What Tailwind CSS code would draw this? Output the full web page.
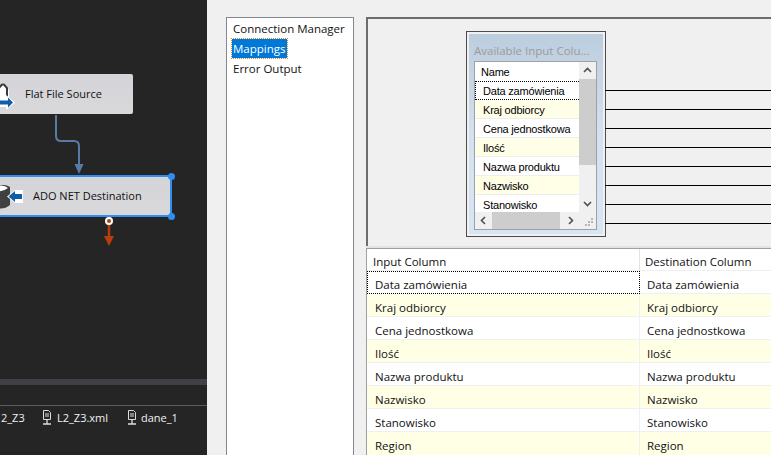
<!DOCTYPE html>
<html><head><meta charset="utf-8"><script src="https://cdn.jsdelivr.net/npm/@tailwindcss/browser@4"></script></head>
<body class="m-0 overflow-hidden">
<div class="flex w-[771px] h-[455px] overflow-hidden bg-[#f0f0f0] text-[11.5px] text-black font-['Open_Sans','Noto_Sans',sans-serif]">
  <aside class="w-[207px] h-full flex flex-col bg-[#252526] shrink-0">
    <div class="relative h-[379px]">
      <div class="absolute left-[-20px] top-[74px] w-[153px] h-[40px] rounded-[2px] bg-gradient-to-b from-[#d4d4d8] to-[#d9d9dc] flex items-center pl-[45px] text-[11px] text-[#111]">Flat File Source</div>
      <svg class="absolute left-0 top-[76px]" width="18" height="36" viewBox="0 0 18 36">
        <path d="M-2 14 L2 7 H4 L9 14 V24 H-2Z" fill="#fff"/>
        <path d="M-2 13 L2 8.500 H4 L7 12 V21" fill="none" stroke="#3a3a3a" stroke-width="2"/>
        <path d="M-1 22 H6 V19 L15 26.500 L6 34 V31 H-1Z" fill="#fff"/>
        <path d="M-1 24.500 H8 V21.500 L13 26.500 L8 31.500 V28.500 H-1Z" fill="#0f5ea8"/>
      </svg>
      <svg class="absolute left-[50px] top-[114px]" width="40" height="64" viewBox="0 0 40 64" fill="none">
        <path d="M6 1 V22 Q6 27 11 27 H24 Q29 27 29 32 V52" stroke="#5a7aa6" stroke-width="2"/>
        <path d="M24.500 50 H33.500 L29 60 Z" fill="#5a7aa6"/>
      </svg>
      <div class="absolute left-[-20px] top-[175px] w-[192px] h-[42px] border-2 border-[#2e8ff0] bg-gradient-to-b from-[#d4d4d8] to-[#d9d9dc] flex items-center pl-[51px] text-[11px] text-[#111]">ADO NET Destination</div>
      <svg class="absolute left-0 top-[178px]" width="26" height="36" viewBox="0 0 26 36">
        <path d="M-3 9 Q4 5 10 9 V27 Q4 32 -3 30Z" fill="#404040"/>
        <path d="M-3 9 Q3 6 8 10 Q3 14 -3 13Z" fill="#fff"/>
        <path d="M23 12 H15 L7 18.500 L15 25 H23Z" fill="#fff"/>
        <path d="M22 16 H15 V13 L8.500 18.500 L15 24 V21 H22Z" fill="#0f5ea8"/>
      </svg>
      <span class="absolute left-[168px] top-[173px] w-[7px] h-[7px] rounded-full bg-[#2e8ff0]"></span>
      <span class="absolute left-[168px] top-[213px] w-[7px] h-[7px] rounded-full bg-[#2e8ff0]"></span>
      <svg class="absolute left-[103px] top-[216px]" width="12" height="32" viewBox="0 0 12 32" fill="none">
        <path d="M6 8 V22" stroke="#b83c0c" stroke-width="2.500"/>
        <path d="M1 20 H11 L6 30 Z" fill="#b83c0c"/>
        <circle cx="6" cy="5" r="3" fill="#b83c0c" stroke="#fff" stroke-width="2"/>
      </svg>
    </div>
    <div class="h-[6px] bg-[#3f4144]"></div>
    <div class="h-[20px]"></div>
    <div class="h-[1px] bg-[#5b5b5b]"></div>
    <div class="flex items-center h-[24px] pl-[1px] text-[#f1f1f1] text-[11px] relative">
      <span class="w-[41px]">2_Z3</span>
      <svg width="10" height="16" viewBox="0 0 10 16" class="mr-[5px]" fill="none" stroke="#ddd"><path d="M1.500 .5 H6.500 L8.500 2.500 V9.500 H1.500 Z M3 4 H7 M3 6 H7"/><path d="M5 10 V14 M1 14 H9" stroke-width="1.300"/></svg>
      <span class="w-[70px]">L2_Z3.xml</span>
      <svg width="10" height="16" viewBox="0 0 10 16" class="mr-[4px]" fill="none" stroke="#ddd"><path d="M1.500 .5 H6.500 L8.500 2.500 V9.500 H1.500 Z M3 4 H7 M3 6 H7"/><path d="M5 10 V14 M1 14 H9" stroke-width="1.300"/></svg>
      <span>dane_1</span>
    </div>
  </aside>

  <main class="flex-1 flex pt-[17px] pl-[19px] min-w-0">
    <nav class="w-[128px] h-[500px] shrink-0 bg-white border border-[#828790] pl-[6px] pt-[1px] leading-[20px] text-[#111]">
      <div class="h-[20px]">Connection Manager</div>
      <div class="h-[20px]"><span class="inline-block h-[19px] leading-[19px] px-[1px] -ml-[1px] bg-[#0078d7] text-white outline outline-1 outline-dotted outline-[#c98a2d]">Mappings</span></div>
      <div class="h-[20px]">Error Output</div>
    </nav>

    <section class="ml-[12px] flex-1 flex flex-col min-w-0">
      <div class="relative h-[231px] border-t-2 border-l-2 border-[#6d6d6d]">
        <div class="absolute left-[98px] top-[12px] w-[140px] h-[206px] border border-[#4d4d4d] p-[2px] bg-[#f0f0f0]">
          <div class="h-full flex flex-col bg-gradient-to-b from-[#bccddd] via-[#d3e1f0] to-[#d8e5f5] pl-[5px] pr-[6px] pb-[5px]">
            <div class="h-[27px] leading-[33px] text-[#9b9b9b] whitespace-nowrap">Available Input Colu...</div>
            <div class="flex-1 border border-[#a0a0a0] bg-white flex flex-col text-[11px] font-['Liberation_Sans',sans-serif]">
              <div class="flex-1 flex min-h-0">
                <div class="flex-1 min-w-0 tracking-[-0.2px]">
                  <div class="h-[19px] leading-[20px] pl-[6px] text-black">Name</div>
                  <div class="h-[19px] leading-[19px] pl-[7px] border-y border-l border-dotted border-black">Data zamówienia</div>
                  <div class="h-[19px] leading-[20px] pl-[8px] bg-[#fffee6] border-b border-[#eee]">Kraj odbiorcy</div>
                  <div class="h-[19px] leading-[20px] pl-[8px] border-b border-[#eee]">Cena jednostkowa</div>
                  <div class="h-[19px] leading-[20px] pl-[8px] bg-[#fffee6] border-b border-[#eee]">Ilość</div>
                  <div class="h-[19px] leading-[20px] pl-[8px] border-b border-[#eee]">Nazwa produktu</div>
                  <div class="h-[19px] leading-[20px] pl-[8px] bg-[#fffee6] border-b border-[#eee]">Nazwisko</div>
                  <div class="h-[17px] leading-[20px] pl-[8px] overflow-hidden">Stanowisko</div>
                </div>
                <div class="w-[17px] bg-[#f0f0f0] flex flex-col">
                  <svg width="17" height="17" viewBox="0 0 17 17" fill="none" stroke="#505050" stroke-width="1.600"><path d="M5 10 L8.500 6.500 L12 10"/></svg>
                  <div class="h-[86px] bg-[#cdcdcd]"></div>
                  <div class="flex-1"></div>
                  <svg width="17" height="17" viewBox="0 0 17 17" fill="none" stroke="#505050" stroke-width="1.600"><path d="M5 7 L8.500 10.500 L12 7"/></svg>
                </div>
              </div>
              <div class="h-[17px] bg-[#f0f0f0] flex shrink-0 items-center">
                <svg width="17" height="17" viewBox="0 0 17 17" fill="none" stroke="#505050" stroke-width="1.600"><path d="M10 5 L6.500 8.500 L10 12"/></svg>
                <div class="w-[68px] h-full bg-[#cdcdcd]"></div>
                <div class="flex-1"></div>
                <svg width="17" height="17" viewBox="0 0 17 17" fill="none" stroke="#505050" stroke-width="1.600"><path d="M7 5 L10.500 8.500 L7 12"/></svg>
                <svg width="17" height="17" viewBox="0 0 17 17" fill="#b5b5b5"><path d="M12 6h2v2h-2zM9 9h2v2H9zM12 9h2v2h-2zM6 12h2v2H6zM9 12h2v2h-2z"/></svg>
              </div>
            </div>
          </div>
        </div>
        <svg class="absolute left-[236px] top-[71px]" width="170" height="140" viewBox="0 0 170 140" stroke="#000" fill="none">
          <path d="M1 .5H170M1 19.500H170M1 38.500H170M1 57.500H170M1 76.500H170M1 95.500H170M1 114.500H170M1 133.500H170"/>
        </svg>
      </div>
      <div class="h-[2px] bg-[#e3e3e3]"></div>
      <div class="border-t border-l border-[#a0a0a0] bg-white text-[#111]">
        <div class="h-[22px] grid grid-cols-[273px_1fr] grid-rows-[22px] border-b border-[#f0f0f0]">
          <div class="pl-[6px] pt-[3px] leading-[20px] border-r border-[#e3e3e3]">Input Column</div>
          <div class="pl-[5px] pt-[3px] leading-[20px]">Destination Column</div>
        </div>
        <div class="h-[23px] grid grid-cols-[273px_1fr] grid-rows-[23px]">
          <div class="pl-[7px] pt-[3px] leading-[20px] border border-dotted border-black">Data zamówienia</div>
          <div class="pl-[7px] pt-[4px] leading-[20px] border-b border-[#f0f0f0]">Data zamówienia</div>
        </div>
        <div class="h-[23px] grid grid-cols-[273px_1fr] grid-rows-[23px] bg-[#ffffe6]">
          <div class="pl-[8px] pt-[4px] leading-[20px] border-r border-b border-[#f0f0f0]">Kraj odbiorcy</div>
          <div class="pl-[7px] pt-[4px] leading-[20px] border-b border-[#f0f0f0]">Kraj odbiorcy</div>
        </div>
        <div class="h-[23px] grid grid-cols-[273px_1fr] grid-rows-[23px]">
          <div class="pl-[8px] pt-[4px] leading-[20px] border-r border-b border-[#f0f0f0]">Cena jednostkowa</div>
          <div class="pl-[7px] pt-[4px] leading-[20px] border-b border-[#f0f0f0]">Cena jednostkowa</div>
        </div>
        <div class="h-[23px] grid grid-cols-[273px_1fr] grid-rows-[23px] bg-[#ffffe6]">
          <div class="pl-[8px] pt-[4px] leading-[20px] border-r border-b border-[#f0f0f0]">Ilość</div>
          <div class="pl-[7px] pt-[4px] leading-[20px] border-b border-[#f0f0f0]">Ilość</div>
        </div>
        <div class="h-[23px] grid grid-cols-[273px_1fr] grid-rows-[23px]">
          <div class="pl-[8px] pt-[4px] leading-[20px] border-r border-b border-[#f0f0f0]">Nazwa produktu</div>
          <div class="pl-[7px] pt-[4px] leading-[20px] border-b border-[#f0f0f0]">Nazwa produktu</div>
        </div>
        <div class="h-[23px] grid grid-cols-[273px_1fr] grid-rows-[23px] bg-[#ffffe6]">
          <div class="pl-[8px] pt-[4px] leading-[20px] border-r border-b border-[#f0f0f0]">Nazwisko</div>
          <div class="pl-[7px] pt-[4px] leading-[20px] border-b border-[#f0f0f0]">Nazwisko</div>
        </div>
        <div class="h-[23px] grid grid-cols-[273px_1fr] grid-rows-[23px]">
          <div class="pl-[8px] pt-[4px] leading-[20px] border-r border-b border-[#f0f0f0]">Stanowisko</div>
          <div class="pl-[7px] pt-[4px] leading-[20px] border-b border-[#f0f0f0]">Stanowisko</div>
        </div>
        <div class="h-[23px] grid grid-cols-[273px_1fr] grid-rows-[23px] bg-[#ffffe6]">
          <div class="pl-[8px] pt-[4px] leading-[20px] border-r border-[#f0f0f0]">Region</div>
          <div class="pl-[7px] pt-[4px] leading-[20px]">Region</div>
        </div>
      </div>
    </section>
  </main>
</div>
</body></html>
